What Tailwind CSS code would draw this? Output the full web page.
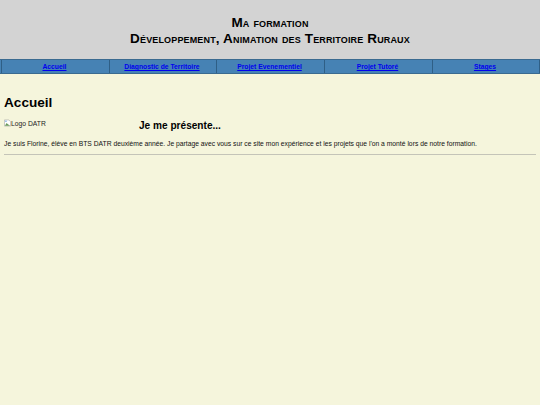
<!DOCTYPE html>
<html>

<head>
    <meta http-equiv="Content-Type" content="text/html; charset=UTF-8">
    <title>Accueil</title>
    <script src="https://cdn.jsdelivr.net/npm/@tailwindcss/browser@4"></script>
</head>

<body class="bg-[#f5f5dc] font-['Liberation_Sans',Arial,sans-serif] text-black w-[540px] h-[405px] overflow-hidden">
    <!-- header -->
    <div class="h-[59px] bg-[#d3d3d3] pt-[15px] text-center font-bold text-[13.5px] tracking-[0.15px] leading-[16px] [font-variant:small-caps]">
        <p>Ma formation</p>
        <p>Développement, Animation des Territoire Ruraux</p>
    </div>
    <!-- menu -->
    <div class="h-[15px] bg-[#4682b4] border-y border-[#3a6a90] grid grid-cols-[109px_107px_108px_108px_107px] pl-px text-center text-[6.75px] leading-[13px] font-bold">
        <div class="border-x border-[#2f5f86] pr-[2px]"><a href="#" class="text-[#0000ee] underline">Accueil</a></div>
        <div class="border-r border-[#2f5f86] pr-[2px]"><a href="#" class="text-[#0000ee] underline">Diagnostic de Territoire</a></div>
        <div class="border-r border-[#2f5f86] pr-[2px]"><a href="#" class="text-[#0000ee] underline">Projet Evenementiel</a></div>
        <div class="border-r border-[#2f5f86] pr-[2px]"><a href="#" class="text-[#0000ee] underline">Projet Tutoré</a></div>
        <div class="border-r border-[#2f5f86] pr-[2px]"><a href="#" class="text-[#0000ee] underline">Stages</a></div>
    </div>
    <!-- contenu -->
    <div class="px-1">
        <h1 class="mt-[20px] text-[13.6px] leading-[18px] font-bold">Accueil</h1>
        <div class="flex mt-[7px] h-[15px]">
            <div class="w-[135px] flex items-start text-[6.75px] leading-[9px] text-[#222]">
                <svg width="7" height="8" viewBox="0 0 8 8" class="shrink-0">
                    <path d="M.5.5h5l2 2v5h-7z" fill="#fff" stroke="#999" stroke-width=".6" />
                    <path d="M1 7l2-3 1.5 1.5L7 7z" fill="#6a9a5a" />
                    <path d="M1.2 1.2h2v1.6h-2z" fill="#9cc0ec" />
                </svg>
                <span>Logo DATR</span>
            </div>
            <h2 class="text-[10.1px] leading-[13px] font-bold">Je me présente...</h2>
        </div>
        <p class="mt-[5px] text-[6.75px] leading-[9px] text-[#111]">Je suis Florine, élève en BTS DATR deuxième année. Je partage avec vous sur ce site mon expérience et les projets que l'on a monté lors de notre formation.</p>
        <hr class="mt-[6px] border-t border-[#c4c4b8]">
    </div>
</body>

</html>
